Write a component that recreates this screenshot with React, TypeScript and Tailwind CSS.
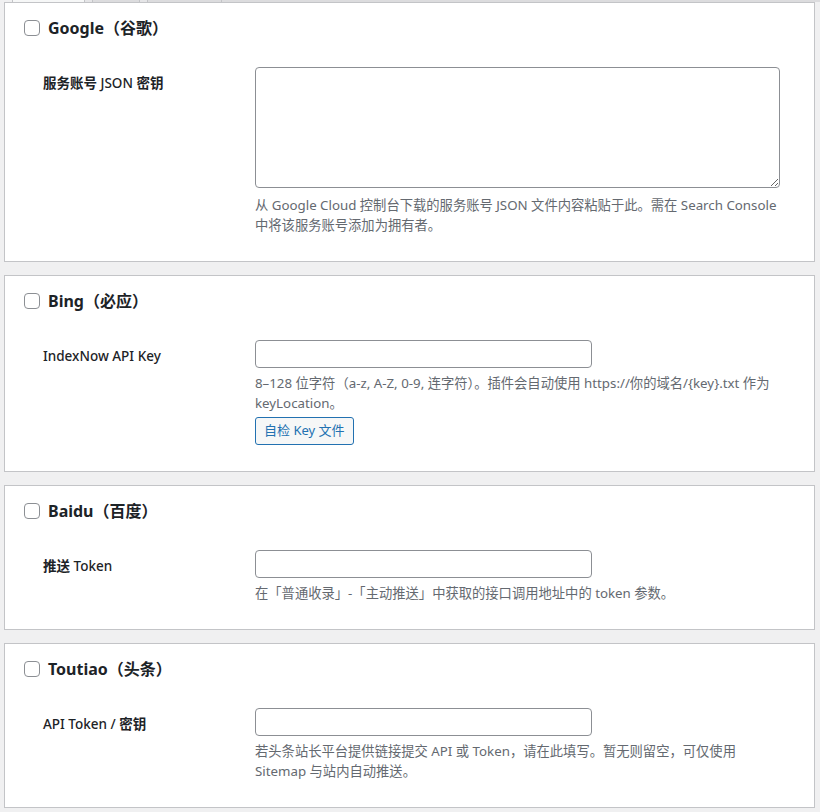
import React from "react";

const font = { fontFamily: '"Noto Sans", "Noto Sans CJK SC", sans-serif' };

type Field = {
  label: string;
  kind: "textarea" | "input";
  desc: string;
  button?: string;
};

type Engine = {
  title: string;
  field: Field;
};

const engines: Engine[] = [
  {
    title: "Google（谷歌）",
    field: {
      label: "服务账号 JSON 密钥",
      kind: "textarea",
      desc: "从 Google Cloud 控制台下载的服务账号 JSON 文件内容粘贴于此。需在 Search Console 中将该服务账号添加为拥有者。",
    },
  },
  {
    title: "Bing（必应）",
    field: {
      label: "IndexNow API Key",
      kind: "input",
      desc: "8–128 位字符（a-z, A-Z, 0-9, 连字符）。插件会自动使用 https://你的域名/{key}.txt 作为 keyLocation。",
      button: "自检 Key 文件",
    },
  },
  {
    title: "Baidu（百度）",
    field: {
      label: "推送 Token",
      kind: "input",
      desc: "在「普通收录」-「主动推送」中获取的接口调用地址中的 token 参数。",
    },
  },
  {
    title: "Toutiao（头条）",
    field: {
      label: "API Token / 密钥",
      kind: "input",
      desc: "若头条站长平台提供链接提交 API 或 Token，请在此填写。暂无则留空，可仅使用 Sitemap 与站内自动推送。",
    },
  },
];

// CJK runs render heavier than the latin text in the labels
function Label({ text }: { text: string }) {
  const parts = text.split(/([\u4e00-\u9fff]+)/).filter(Boolean);
  return (
    <>
      {parts.map((p, i) =>
        /[\u4e00-\u9fff]/.test(p) ? (
          <span key={i} className="font-bold">
            {p}
          </span>
        ) : (
          <span key={i} className="font-medium">
            {p}
          </span>
        )
      )}
    </>
  );
}

function EngineCard({ engine }: { engine: Engine }) {
  const { field } = engine;
  return (
    <div className="bg-white border border-[#c3c4c7] pt-[15px] pb-[26px]">
      <label className="flex items-center gap-2 pl-[19px] h-5">
        <input
          type="checkbox"
          className="appearance-none w-4 h-4 rounded-[4px] border border-[#8c8f94] bg-white"
        />
        <span className="text-[16px] font-bold text-[#1d2327] leading-5">{engine.title}</span>
      </label>
      <div className="flex mt-[29px]">
        <div className="w-[250px] shrink-0 pl-[38px] pt-[6px] text-[13.5px] leading-5 text-[#1d2327]">
          <Label text={field.label} />
        </div>
        <div className="w-[526px]">
          {field.kind === "textarea" ? (
            <textarea className="block w-[525px] h-[121px] rounded-[4px] border border-[#8c8f94] bg-white" />
          ) : (
            <input
              type="text"
              className="block w-[337px] h-[28px] rounded-[4px] border border-[#8c8f94] bg-white"
            />
          )}
          <p
            className={`text-[13.3px] leading-5 text-[#646970] ${
              field.kind === "textarea" ? "mt-[7px]" : "mt-[5px]"
            }`}
          >
            {field.desc}
          </p>
          {field.button && (
            <button className="mt-[4px] h-[28px] px-[8px] rounded-[3px] border border-[#2271b1] bg-[#f6f7f7] text-[13px] text-[#2271b1]">
              {field.button}
            </button>
          )}
        </div>
      </div>
    </div>
  );
}

export default function App() {
  return (
    <div className="min-h-[812px] bg-[#f0f0f1]" style={font}>
      <div className="flex h-[2px] overflow-hidden bg-[#dcdcde]">
        <div className="w-[12px] bg-[#f0f0f1]" />
        <div className="w-[73px] border-x border-[#c3c4c7] bg-[#f6f7f7]" />
        <div className="w-[7px] bg-[#e5e5e7]" />
        <div className="w-[48px] border-x border-[#c3c4c7] bg-[#dcdcde]" />
        <div className="w-[7px] bg-[#e5e5e7]" />
        <div className="w-[75px] border-x border-[#c3c4c7] bg-[#dcdcde]" />
      </div>
      <div className="flex flex-col gap-[13px] ml-1 mr-[5px]">
        {engines.map((e) => (
          <EngineCard key={e.title} engine={e} />
        ))}
      </div>
    </div>
  );
}
